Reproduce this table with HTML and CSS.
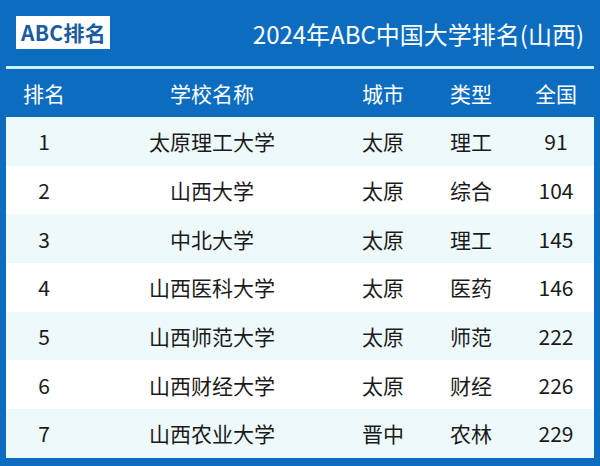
FILE: index.html
```html
<!DOCTYPE html>
<html>
<head>
<meta charset="utf-8">
<link rel="stylesheet" href="styles.css">
</head>
<body>
<div class="page">
  <div class="top">
    <div class="badge">ABC排名</div>
    <div class="title">2024年ABC中国大学排名(山西)</div>
  </div>
  <div class="rule"></div>
  <div class="row head">
    <div>排名</div><div>学校名称</div><div>城市</div><div>类型</div><div>全国</div>
  </div>
  <div class="body">
    <div class="row alt"><div>1</div><div>太原理工大学</div><div>太原</div><div>理工</div><div>91</div></div>
    <div class="row"><div>2</div><div>山西大学</div><div>太原</div><div>综合</div><div>104</div></div>
    <div class="row alt"><div>3</div><div>中北大学</div><div>太原</div><div>理工</div><div>145</div></div>
    <div class="row"><div>4</div><div>山西医科大学</div><div>太原</div><div>医药</div><div>146</div></div>
    <div class="row alt"><div>5</div><div>山西师范大学</div><div>太原</div><div>师范</div><div>222</div></div>
    <div class="row"><div>6</div><div>山西财经大学</div><div>太原</div><div>财经</div><div>226</div></div>
    <div class="row alt"><div>7</div><div>山西农业大学</div><div>晋中</div><div>农林</div><div>229</div></div>
  </div>
</div>
</body>
</html>
```
FILE: styles.css
```css
* { box-sizing: border-box; }
html, body { margin: 0; padding: 0; }
body {
  width: 600px;
  height: 466px;
  overflow: hidden;
  background: #0b6cc0;
  font-family: "Noto Sans CJK SC", "Noto Sans", sans-serif;
}
.page { padding: 0 6px; }
.top {
  height: 66px;
  display: flex;
  align-items: center;
  padding: 0 10px;
}
.badge {
  background: #ffffff;
  color: #1b5c9e;
  font-weight: bold;
  font-size: 21px;
  line-height: 33px;
  height: 33px;
  padding: 0 4px 0 5px;
  margin-top: -2px;
  letter-spacing: 0.3px;
}
.title {
  flex: 1;
  text-align: right;
  color: #ffffff;
  font-size: 24px;
  padding-right: 0;
  letter-spacing: 0;
}
.rule {
  height: 3px;
  background: #c9f1ff;
}
.row {
  display: grid;
  grid-template-columns: 76px 260px 82px 94px 1fr;
  align-items: center;
  text-align: center;
  height: 48.7px;
  font-size: 21px;
  color: #1a1a1a;
}
.head {
  color: #ffffff;
  height: 48px;
  font-size: 21px;
}
.body { background: #ffffff; }
.row.alt { background: #eef9fc; }
```
